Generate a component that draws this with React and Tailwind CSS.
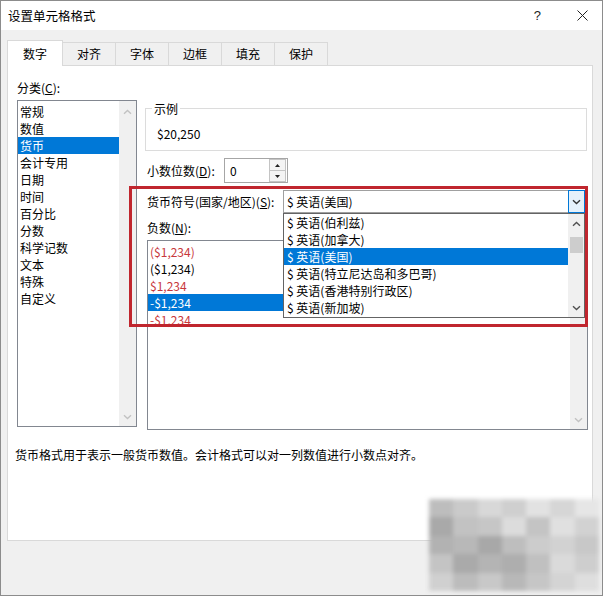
const Down = ({ color = "#404040", w = 9 }) => (
  <svg width={w} height="6" viewBox="0 0 9 6">
    <path d="M1 1.2l3.5 3.3L8 1.2" fill="none" stroke={color} strokeWidth="1.4" />
  </svg>
);
const Up = ({ color = "#404040" }) => (
  <svg width="9" height="6" viewBox="0 0 9 6">
    <path d="M1 4.8l3.5-3.3L8 4.8" fill="none" stroke={color} strokeWidth="1.4" />
  </svg>
);

export default function App() {
  const cats = ["常规", "数值", "货币", "会计专用", "日期", "时间", "百分比", "分数", "科学记数", "文本", "特殊", "自定义"];
  const negs = [
    { t: "($1,234)", red: true },
    { t: "($1,234)" },
    { t: "$1,234", red: true },
    { t: "-$1,234", sel: true },
    { t: "-$1,234", red: true },
  ];
  const cur = ["伯利兹", "加拿大", "美国", "特立尼达岛和多巴哥", "香港特别行政区", "新加坡"];
  const tabs = ["对齐", "字体", "边框", "填充", "保护"];
  const wm = [
    ["#bdbdbd", "#cacaca", "#d8d8d8", "#cfcfcf", "#e2e2e2", "#d6d6d6", "#e6e6e6"],
    ["#a9a9a9", "#c2c2c2", "#c6c6c6", "#dcdcdc", "#c4c4c4", "#e0e0e0", "#d2d2d2"],
    ["#b2b2b2", "#b8b8b8", "#a8a8a8", "#bebebe", "#cccccc", "#d2d2d2", "#c8c8c8"],
    ["#c4c4c4", "#aaaaaa", "#b4b4b4", "#aeaeae", "#c0c0c0", "#dadada", "#cecece"],
    ["#d0d0d0", "#bcbcbc", "#c8c8c8", "#b8b8b8", "#c6c6c6", "#d4d4d4", "#dedede"],
  ];

  return (
    <div className="w-[603px] h-[596px] bg-[#f0f0f0] border border-[#8c8c8c] relative overflow-hidden flex flex-col text-[12px] leading-[17px] text-black font-['Noto_Sans_CJK_SC','Noto_Sans',sans-serif]">
      {/* title bar */}
      <div className="h-[29px] shrink-0 bg-white flex items-center pl-[7px] pr-[14px]">
        <span className="text-[12.5px]">设置单元格格式</span>
        <div className="ml-auto flex items-center gap-[36px]">
          <span className="text-[13px] font-['Liberation_Sans',sans-serif] text-[#222]">?</span>
          <svg width="11" height="11" viewBox="0 0 11 11">
            <path d="M0.5 0.5l10 10M10.5 0.5l-10 10" stroke="#222" strokeWidth="1" />
          </svg>
        </div>
      </div>

      {/* body */}
      <div className="flex-1 pl-[6px] pt-[10px]">
        {/* tabs */}
        <div className="flex items-end h-[25px] relative z-10">
          <div className="w-[56px] h-[26px] mb-[-1px] bg-white border-l border-t border-r border-[#d9d9d9] flex items-center justify-center">
            数字
          </div>
          {tabs.map((t) => (
            <div key={t} className="w-[53px] h-[23px] border-t border-r border-[#d9d9d9] flex items-center justify-center pb-[1px]">
              {t}
            </div>
          ))}
        </div>

        {/* panel */}
        <div className="w-[586px] h-[476px] bg-white border border-[#d9d9d9] relative flex flex-col">
          <div className="flex pl-[9px] pt-[13px]">
            {/* left column */}
            <div className="w-[120px] flex flex-col">
              <div className="mb-[4px]">
                分类(<span className="underline">C</span>):
              </div>
              <div className="h-[327px] border border-[#828790] flex">
                <div className="flex-1 pt-[2px]">
                  {cats.map((c) => (
                    <div key={c} className={`h-[17px] pl-[2px] ${c === "货币" ? "bg-[#0078d7] text-white" : ""}`}>
                      {c}
                    </div>
                  ))}
                </div>
                <div className="w-[17px] bg-[#f0f0f0] flex flex-col items-center justify-between pt-[8px] pb-[6px]">
                  <Up color="#c2c2c2" />
                  <Down color="#c2c2c2" />
                </div>
              </div>
            </div>

            {/* right column */}
            <div className="w-[443px] ml-[8px] pt-[21px] flex flex-col">
              <fieldset className="border border-[#dcdcdc] h-[51px] w-[442px]">
                <legend className="ml-[6px] px-[2px] leading-[17px]">示例</legend>
                <div className="mt-[8px] pl-[11px]">$20,250</div>
              </fieldset>

              <div className="flex items-center mt-[7px] pl-[2px]">
                <div className="w-[77px]">
                  小数位数(<span className="underline">D</span>):
                </div>
                <div className="w-[64px] h-[25px] border border-[#a6a6a6] flex items-center">
                  <span className="pl-[5px] flex-1">0</span>
                  <div className="w-[17px] h-[23px] mr-[1px] flex flex-col">
                    <div className="flex-1 border border-[#c4c4c4] bg-[#f4f4f4] flex items-center justify-center">
                      <svg width="5" height="3" viewBox="0 0 5 3"><path d="M2.5 0L5 3H0z" fill="#222" /></svg>
                    </div>
                    <div className="flex-1 border border-t-0 border-[#c4c4c4] bg-[#f4f4f4] flex items-center justify-center">
                      <svg width="5" height="3" viewBox="0 0 5 3"><path d="M0 0h5L2.5 3z" fill="#222" /></svg>
                    </div>
                  </div>
                </div>
              </div>

              <div className="flex items-center mt-[7px] pl-[2px]">
                <div className="w-[136px]">
                  货币符号(国家/地区)(<span className="underline">S</span>):
                </div>
                <div className="w-[302px] h-[23px] border border-[#a0a0a0] flex items-center">
                  <span className="pl-[3px] flex-1">$ 英语(美国)</span>
                  <div className="w-[17px] h-[23px] -mr-[1px] border border-[#0078d7] bg-[#e5f1fb] flex items-center justify-center">
                    <Down color="#333" />
                  </div>
                </div>
              </div>

              <div className="mt-[6px] pl-[2px]">
                负数(<span className="underline">N</span>):
              </div>
              <div className="ml-[2px] mt-[4px] w-[441px] h-[190px] border border-[#828790] flex">
                <div className="flex-1 pt-[2px]">
                  {negs.map((n, i) => (
                    <div
                      key={i}
                      className={`h-[17px] pl-[2px] ${n.sel ? "bg-[#0078d7] text-white" : n.red ? "text-[#c8383c]" : ""}`}
                    >
                      {n.t}
                    </div>
                  ))}
                </div>
                <div className="w-[17px] bg-[#f0f0f0] flex flex-col items-center justify-end pb-[6px]">
                  <Down color="#c2c2c2" />
                </div>
              </div>
            </div>
          </div>

          <div className="pl-[7px] mt-[16px]">
            货币格式用于表示一般货币数值。会计格式可以对一列数值进行小数点对齐。
          </div>

          {/* red annotation box */}
          <div className="absolute left-[121px] top-[120px] w-[459px] h-[141px] border-[3px] border-[#c0262e] pointer-events-none z-20" />

          {/* open dropdown list */}
          <div className="absolute left-[275px] top-[147px] w-[302px] h-[105px] bg-white border border-[#646464] flex overflow-hidden z-10">
            <div className="flex-1">
              {cur.map((c) => (
                <div key={c} className={`h-[17px] pl-[3px] ${c === "美国" ? "bg-[#0078d7] text-white" : ""}`}>
                  $ 英语({c})
                </div>
              ))}
            </div>
            <div className="w-[16px] bg-[#f0f0f0] flex flex-col items-center pt-[7px]">
              <Up color="#505050" />
              <div className="w-[13px] h-[16px] bg-[#cdcdcd] mt-[10px]" />
              <div className="mt-auto mb-[6px]">
                <Down color="#505050" />
              </div>
            </div>
          </div>
        </div>
      </div>

      {/* blurred watermark */}
      <div className="absolute left-[428px] top-[498px] w-[170px] h-[92px] grid grid-cols-7 grid-rows-5 blur-[2px]">
        {wm.flat().map((c, i) => (
          <div key={i} style={{ backgroundColor: c }} />
        ))}
      </div>
    </div>
  );
}
